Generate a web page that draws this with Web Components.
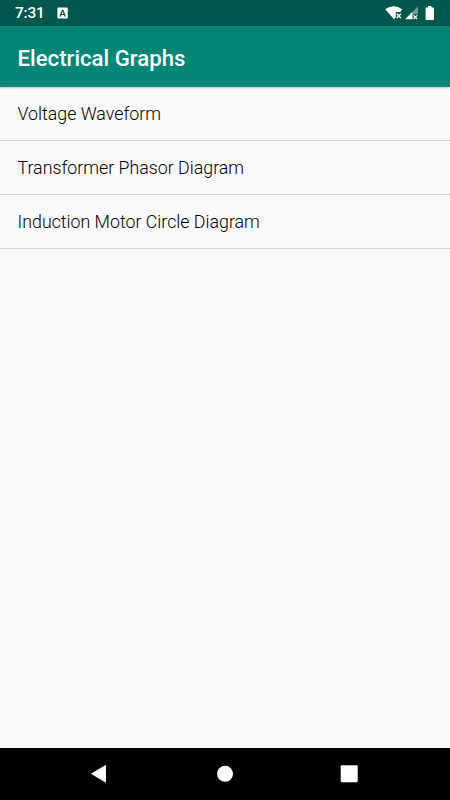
<!DOCTYPE html>
<html lang="en">
<head>
<meta charset="UTF-8">
<meta name="viewport" content="width=device-width, initial-scale=1.0">
<title>Electrical Graphs</title>
<style>
    html, body {
        margin: 0;
        height: 100%;
        overflow: hidden;
        font-family: Roboto, "Liberation Sans", sans-serif;
    }
</style>
</head>
<body>
<graphs-app></graphs-app>
<script>
const GRAPHS = [
    "Voltage Waveform",
    "Transformer Phasor Diagram",
    "Induction Motor Circle Diagram"
];

// status bar: clock, notification and signal icons
class StatusBar extends HTMLElement {
    constructor() {
        super();
        this.attachShadow({ mode: "open" });
        this.shadowRoot.innerHTML = /*HTML*/`
            <style>
            :host {
                display: flex;
                align-items: center;
                height: 26px;
                flex: none;
                background: #00574b;
                color: #fff;
            }
            .time {
                font-size: 15.4px;
                font-weight: 500;
                line-height: 26px;
                letter-spacing: -0.2px;
                margin-left: 15px;
                width: 42px;
            }
            .right {
                margin-left: auto;
            }
            svg {
                display: block;
            }
            </style>
            <span class="time"><slot></slot></span>
            <svg width="12" height="26" viewBox="57 0 12 26">
                <path fill="#fff" fill-rule="evenodd" d="M58.4 7.6h8.4q1 0 1 1v9q0 1-1 1h-8.4q-1 0-1-1v-9q0-1 1-1z
                    M62 9.7L59.4 16.5H60.8L61.3 15H64L64.5 16.5H65.9L63.3 9.7z M62.65 11.3L63.6 13.9H61.7z"/>
            </svg>
            <svg class="right" width="65" height="26" viewBox="385 0 65 26">
                <!-- wifi -->
                <path fill="#fff" d="M385.2 9.3Q393.8 3 402.2 9.3L400.3 12H395.8V17.2L394 19.2z"/>
                <path stroke="#fff" stroke-width="1.5" d="M396.8 13.7l4 4.2m0-4.2l-4 4.2"/>
                <!-- mobile signal -->
                <path fill="#fff" fill-opacity=".4" d="M418 6.3V14.3H412.5V11.8z"/>
                <path fill="#fff" d="M412.5 11.8V19.2H405z"/>
                <path stroke="#fff" stroke-width="1.3" d="M413.5 15.4l3.6 3.6m0-3.6l-3.6 3.6"/>
                <!-- battery -->
                <path fill="#fff" d="M428 6h3.6v1.4h1.6q.8 0 .8.8v11q0 .8-.8.8h-6.8q-.8 0-.8-.8v-11q0-.8.8-.8h1.6z"/>
            </svg>
        `;
    }
}
customElements.define("status-bar", StatusBar);

// top bar with the name of the app
class AppToolbar extends HTMLElement {
    constructor() {
        super();
        this.attachShadow({ mode: "open" });
        this.shadowRoot.innerHTML = /*HTML*/`
            <style>
            :host {
                display: flex;
                align-items: center;
                box-sizing: border-box;
                height: 61px;
                flex: none;
                padding: 3px 17.5px 0;
                background: #008577;
                color: #fff;
                box-shadow: 0 1px 2px rgba(0, 0, 0, 0.22);
                z-index: 1;
            }
            h1 {
                margin: 0;
                font-size: 22.2px;
                font-weight: 500;
                line-height: 26px;
            }
            </style>
            <h1><slot></slot></h1>
        `;
    }
}
customElements.define("app-toolbar", AppToolbar);

// one row of the list
class GraphItem extends HTMLElement {
    constructor() {
        super();
        this.attachShadow({ mode: "open" });
        this.shadowRoot.innerHTML = /*HTML*/`
            <style>
            :host {
                display: flex;
                align-items: center;
                box-sizing: border-box;
                height: 54px;
                padding: 1px 17.5px 0;
                border-bottom: 1px solid #d5d5d5;
                font-size: 17.8px;
                font-weight: 300;
                line-height: 24px;
                color: #000;
            }
            </style>
            <slot></slot>
        `;
    }
}
customElements.define("graph-item", GraphItem);

// back, home and recents
class NavBar extends HTMLElement {
    constructor() {
        super();
        this.attachShadow({ mode: "open" });
        this.shadowRoot.innerHTML = /*HTML*/`
            <style>
            :host {
                display: flex;
                align-items: center;
                justify-content: center;
                gap: 100px;
                height: 52px;
                flex: none;
                background: #000;
            }
            svg {
                display: block;
                fill: #fff;
            }
            </style>
            <svg width="24" height="24" viewBox="0 0 24 24"><path d="M2.3 11.4L16.6 3.1Q17 2.9 17 3.4V20.3Q17 20.8 16.6 20.6L2.3 12.1Q1.8 11.8 2.3 11.4z"/></svg>
            <svg width="24" height="24" viewBox="0 0 24 24"><circle cx="12" cy="11.8" r="8"/></svg>
            <svg width="24" height="24" viewBox="0 0 24 24"><rect x="3.7" y="3.2" width="17" height="17" rx="1.2"/></svg>
        `;
    }
}
customElements.define("nav-bar", NavBar);

class GraphsApp extends HTMLElement {
    constructor() {
        super();
        this.attachShadow({ mode: "open" });
    }
    connectedCallback() {
        this.render();
    }
    render() {
        this.shadowRoot.innerHTML = /*HTML*/`
            <style>
            :host {
                display: flex;
                flex-direction: column;
                height: 100vh;
                background: #fafafa;
            }
            main {
                flex: 1;
            }
            </style>
            <status-bar>7:31</status-bar>
            <app-toolbar>Electrical Graphs</app-toolbar>
            <main>
                ${GRAPHS.map(nombre => `<graph-item>${nombre}</graph-item>`).join("")}
            </main>
            <nav-bar></nav-bar>
        `;
    }
}
customElements.define("graphs-app", GraphsApp);
</script>
</body>
</html>
